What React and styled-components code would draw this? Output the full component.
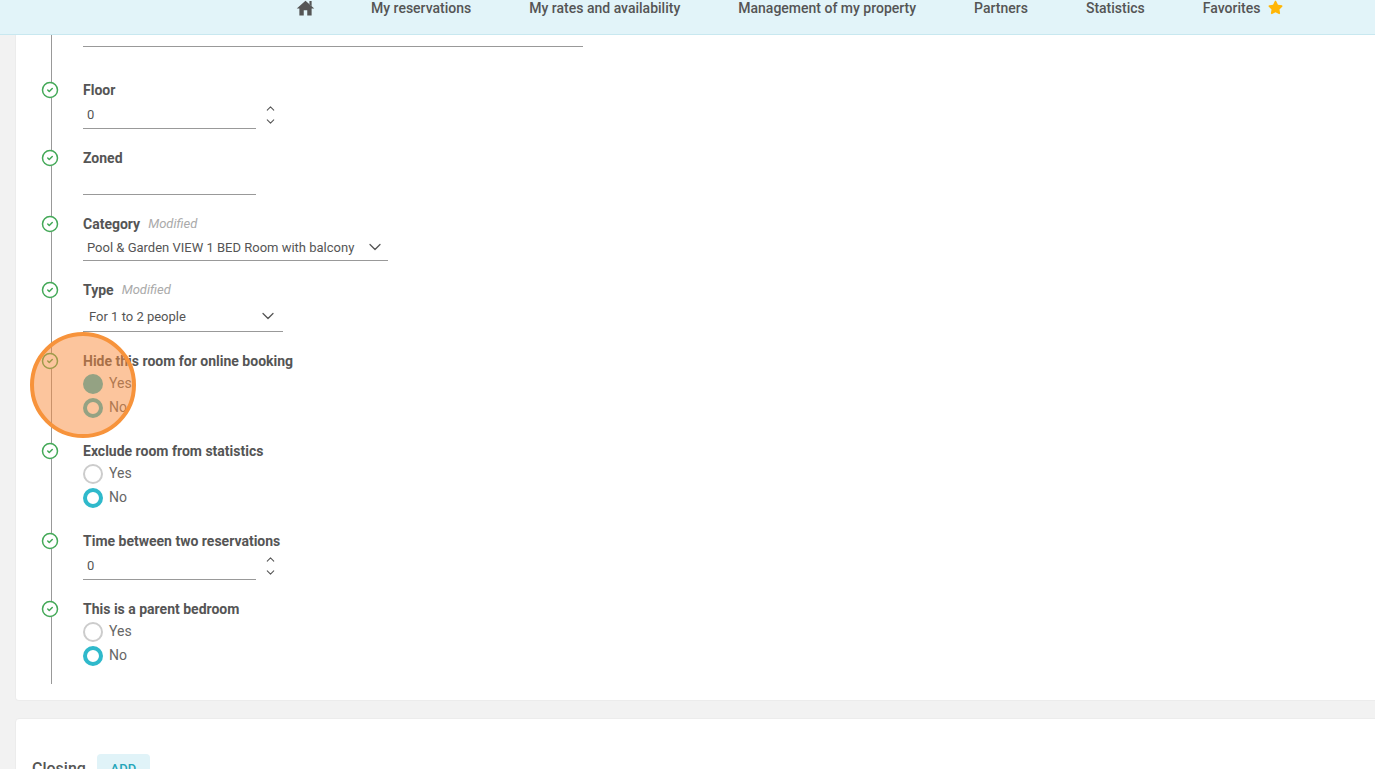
import React from "react";
import styled, { createGlobalStyle } from "styled-components";
import { CircleCheck, ChevronDown, ChevronUp } from "lucide-react";
import { FaStar } from "react-icons/fa";

const GlobalStyle = createGlobalStyle`
	html, body {
		margin: 0;
		padding: 0;
		background: #f2f2f2;
		font-family: Roboto, "Liberation Sans", sans-serif;
		color: #555;
	}
`;

const Page = styled.div`
	position: relative;
	width: 1375px;
	height: 769px;
	overflow: hidden;
`;

const Header = styled.header`
	display: flex;
	align-items: flex-start;
	gap: 58px;
	box-sizing: border-box;
	height: 35px;
	padding-left: 297px;
	background: #e2f4f9;
	border-bottom: 1px solid #c8e8f0;
`;

const NavItem = styled.a`
	display: flex;
	align-items: center;
	gap: 7px;
	height: 17px;
	font-size: 14px;
	font-weight: 500;
	line-height: 17px;
	color: #555;
	white-space: nowrap;
`;

const HomeIcon = styled.svg`
	display: block;
	flex: none;
	width: 21px;
	height: 21px;
	margin: -1px -3px 0 -2px;
	fill: #555;
`;

const StarIcon = styled(FaStar)`
	margin: -2px 0 0 1px;
	color: #ffb606;
`;

const Card = styled.section`
	box-sizing: border-box;
	width: 1420px;
	margin-left: 15px;
	background: #fff;
	border: 1px solid #ececec;
	border-radius: 4px;
`;

const FormCard = styled(Card)`
	border-top: 0;
	border-radius: 0 0 4px 4px;
	padding-bottom: 16px;
`;

const ClosingCard = styled(Card)`
	margin-top: 17px;
	padding: 35px 0 40px 16px;
`;

const Timeline = styled.div`
	display: flex;
	flex-direction: column;
	gap: 19px;
	margin-left: 35px;
	padding-bottom: 17px;
	border-left: 1px solid #999;
`;

const TopField = styled.div`
	box-sizing: border-box;
	width: 500px;
	height: 12px;
	margin: 0 0 14px 31px;
	border-bottom: 1px solid #999;
`;

const Step = styled.div`
	display: flex;
	align-items: flex-start;
`;

const StepMark = styled.div`
	display: flex;
	align-items: center;
	justify-content: center;
	flex: none;
	width: 16px;
	height: 16px;
	margin: 2px 25px 0 -10px;
	background: #fff;
	border-radius: 50%;
	color: #43a857;

	svg {
		flex: none;
	}
`;

const StepBody = styled.div`
	display: flex;
	flex-direction: column;
	align-items: flex-start;
`;

const LabelRow = styled.div`
	display: flex;
	align-items: center;
	gap: 8px;
	height: 20px;
`;

const Label = styled.span`
	font-size: 14px;
	font-weight: 700;
	color: #555;
	white-space: nowrap;
`;

const Modified = styled.span`
	margin-top: -2px;
	font-size: 13px;
	font-style: italic;
	color: #aaa;
`;

const FieldRow = styled.div`
	display: flex;
	align-items: center;
	gap: 8px;
`;

const Field = styled.div`
	display: flex;
	align-items: center;
	justify-content: space-between;
	box-sizing: border-box;
	width: ${(p) => p.$width}px;
	height: ${(p) => p.$height}px;
	padding: ${(p) => p.$top || 0}px ${(p) => p.$right || 0}px 0 ${(p) => p.$left || 4}px;
	border-bottom: 1px solid #999;
	font-size: 13px;
	color: #555;
	white-space: nowrap;
`;

const Spinner = styled.div`
	display: flex;
	flex-direction: column;
	color: #555;
`;

const RadioGroup = styled.div`
	display: flex;
	flex-direction: column;
	padding-bottom: ${(p) => p.$bottom || 0}px;
`;

const RadioRow = styled.label`
	display: flex;
	align-items: center;
	gap: 6px;
	height: 24px;
	font-size: 14px;
	color: #666;
`;

const RadioDot = styled.span`
	box-sizing: border-box;
	width: 20px;
	height: 20px;
	margin-top: 2px;
	border-radius: 50%;
	border: ${(p) => (p.$on ? "4px solid #2fb9cb" : "2px solid #ccc")};
	background: ${(p) => (p.$filled ? "#2fb9cb" : "#fff")};
`;

const ClosingRow = styled.div`
	display: flex;
	align-items: center;
	gap: 11px;
`;

const ClosingTitle = styled.h2`
	margin: 0;
	font-size: 16px;
	font-weight: 500;
	color: #555;
`;

const AddButton = styled.button`
	width: 53px;
	height: 28px;
	border: 0;
	border-radius: 4px;
	background: #e0f3f8;
	color: #25a5b8;
	font-family: inherit;
	font-size: 13px;
	font-weight: 500;
`;

const Highlight = styled.div`
	position: absolute;
	left: 30px;
	top: 332px;
	box-sizing: border-box;
	width: 106px;
	height: 106px;
	border: 4px solid #f7933b;
	border-radius: 50%;
	background: rgba(250, 140, 60, 0.5);
`;

const navLinks = [
	"My reservations",
	"My rates and availability",
	"Management of my property",
	"Partners",
	"Statistics",
];

function Mark() {
	return (
		<StepMark>
			<CircleCheck size={18} strokeWidth={2} />
		</StepMark>
	);
}

function NumberField() {
	return (
		<FieldRow>
			<Field $width={173} $height={29}>0</Field>
			<Spinner>
				<ChevronUp size={13} strokeWidth={1.9} />
				<ChevronDown size={13} strokeWidth={1.9} />
			</Spinner>
		</FieldRow>
	);
}

function YesNo({ yesOn, bottom }) {
	return (
		<RadioGroup $bottom={bottom}>
			<RadioRow>
				<RadioDot $on={yesOn} $filled={yesOn} />
				Yes
			</RadioRow>
			<RadioRow>
				<RadioDot $on />
				No
			</RadioRow>
		</RadioGroup>
	);
}

export default function App() {
	return (
		<Page>
			<GlobalStyle />
			<Header>
				<NavItem>
					<HomeIcon viewBox='0 0 24 24'>
						<path d='M10 20v-6h4v6h5v-8h3L12 3 2 12h3v8z' />
						<path d='M16.5 3.5H19v6l-2.5-2.3z' />
					</HomeIcon>
				</NavItem>
				{navLinks.map((link) => (
					<NavItem key={link}>{link}</NavItem>
				))}
				<NavItem>
					Favorites
					<StarIcon size={15} />
				</NavItem>
			</Header>

			<FormCard>
				<Timeline>
					<TopField />

					<Step>
						<Mark />
						<StepBody>
							<LabelRow>
								<Label>Floor</Label>
							</LabelRow>
							<NumberField />
						</StepBody>
					</Step>

					<Step>
						<Mark />
						<StepBody>
							<LabelRow>
								<Label>Zoned</Label>
							</LabelRow>
							<Field $width={173} $height={27} />
						</StepBody>
					</Step>

					<Step>
						<Mark />
						<StepBody>
							<LabelRow>
								<Label>Category</Label>
								<Modified>Modified</Modified>
							</LabelRow>
							<Field $width={305} $height={27} $right={3}>
								Pool &amp; Garden VIEW 1 BED Room with balcony
								<ChevronDown size={20} strokeWidth={1.5} />
							</Field>
						</StepBody>
					</Step>

					<Step>
						<Mark />
						<StepBody>
							<LabelRow>
								<Label>Type</Label>
								<Modified>Modified</Modified>
							</LabelRow>
							<Field $width={200} $height={32} $left={6} $right={5} $top={1}>
								For 1 to 2 people
								<ChevronDown size={20} strokeWidth={1.5} />
							</Field>
						</StepBody>
					</Step>

					<Step>
						<Mark />
						<StepBody>
							<LabelRow>
								<Label>Hide this room for online booking</Label>
							</LabelRow>
							<YesNo yesOn bottom={3} />
						</StepBody>
					</Step>

					<Step>
						<Mark />
						<StepBody>
							<LabelRow>
								<Label>Exclude room from statistics</Label>
							</LabelRow>
							<YesNo bottom={3} />
						</StepBody>
					</Step>

					<Step>
						<Mark />
						<StepBody>
							<LabelRow>
								<Label>Time between two reservations</Label>
							</LabelRow>
							<NumberField />
						</StepBody>
					</Step>

					<Step>
						<Mark />
						<StepBody>
							<LabelRow>
								<Label>This is a parent bedroom</Label>
							</LabelRow>
							<YesNo />
						</StepBody>
					</Step>
				</Timeline>
			</FormCard>

			<ClosingCard>
				<ClosingRow>
					<ClosingTitle>Closing</ClosingTitle>
					<AddButton>ADD</AddButton>
				</ClosingRow>
			</ClosingCard>

			<Highlight />
		</Page>
	);
}
